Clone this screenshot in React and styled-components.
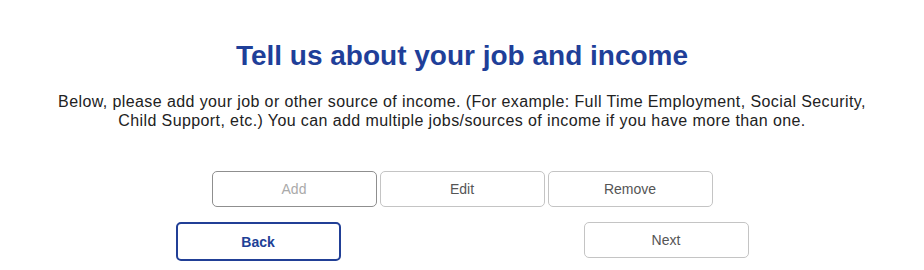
import styled, { createGlobalStyle } from 'styled-components';

const GlobalStyle = createGlobalStyle`
  body {
    margin: 0;
    background: #ffffff;
    font-family: "Liberation Sans", Arial, sans-serif;
  }
`;

const Page = styled.div`
  width: 924px;
  display: flex;
  flex-direction: column;
  align-items: center;
  padding-top: 39px;
`;

const Title = styled.h1`
  margin: 0;
  font-size: 28px;
  font-weight: bold;
  color: #1f3f99;
  line-height: 34px;
`;

const Intro = styled.p`
  margin: 19px 0 0;
  width: 820px;
  font-size: 16px;
  letter-spacing: 0.4px;
  line-height: 19px;
  color: #222;
  text-align: center;
`;

const ActionRow = styled.div`
  display: flex;
  gap: 3px;
  margin-top: 41px;
`;

const NavRow = styled.div`
  display: flex;
  gap: 243px;
  margin-top: 15px;
  align-items: flex-start;
`;

const Button = styled.button`
  width: 165px;
  height: 36px;
  border: 1px solid ${(p) => (p.$strong ? '#8f8f8f' : '#c4c4c4')};
  border-radius: 5px;
  background: #fff;
  font-family: "Liberation Sans", Arial, sans-serif;
  font-size: 14px;
  color: ${(p) => (p.disabled ? '#aaaaaa' : '#555555')};
  cursor: pointer;
`;

const BackButton = styled(Button)`
  height: 39px;
  border: 2px solid #213f96;
  color: #213f96;
  font-weight: bold;
`;

export default function App() {
  return (
    <>
      <GlobalStyle />
      <Page>
        <Title>Tell us about your job and income</Title>
        <Intro>
          Below, please add your job or other source of income. (For example: Full Time
          Employment, Social Security, Child Support, etc.) You can add multiple
          jobs/sources of income if you have more than one.
        </Intro>
        <ActionRow>
          <Button $strong disabled>Add</Button>
          <Button>Edit</Button>
          <Button>Remove</Button>
        </ActionRow>
        <NavRow>
          <BackButton>Back</BackButton>
          <Button>Next</Button>
        </NavRow>
      </Page>
    </>
  );
}
